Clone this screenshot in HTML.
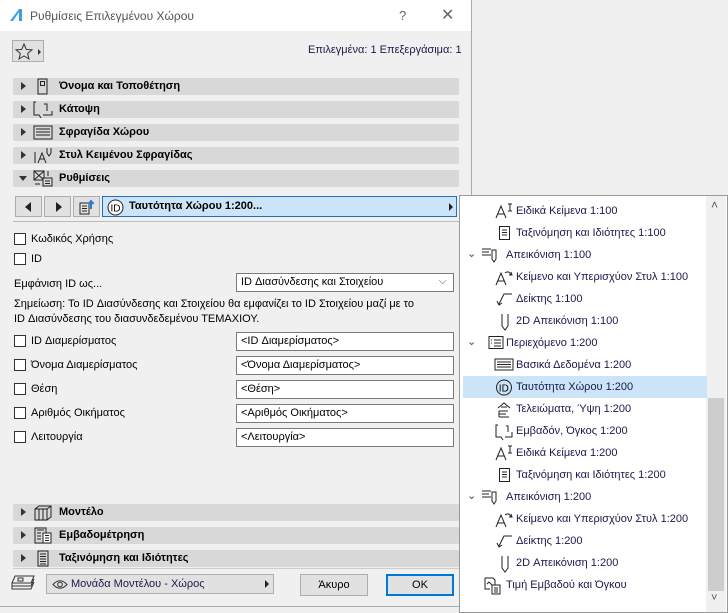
<!DOCTYPE html>
<html><head><meta charset="utf-8">
<style>
*{box-sizing:border-box;margin:0;padding:0}
body{width:728px;height:613px;position:relative;overflow:hidden;background:#f0f0f0;font-family:"Liberation Sans","DejaVu Sans",sans-serif;font-size:11px;color:#000}
.a{position:absolute;white-space:nowrap}
.dlg{position:absolute;left:0;top:0;width:472px;height:607px;background:#f0f0f0;border-right:1px solid #aaa;border-bottom:1px solid #aaa}
.title{position:absolute;left:0;top:0;width:471px;height:31px;background:#fff}
.hd{position:absolute;left:13px;width:446px;height:17px;background:#d8d8d8;border-radius:2px;font-weight:bold;font-size:11px}
.hd .tri{position:absolute;left:8px;top:4px;width:0;height:0;border-left:5px solid #333;border-top:4px solid transparent;border-bottom:4px solid transparent}
.hd .tri.d{left:6px;top:6px;border-top:5px solid #333;border-left:4px solid transparent;border-right:4px solid transparent;border-bottom:0}
.hd .ic{position:absolute;left:20px;top:0px;width:20px;height:17px}
.hd span{position:absolute;left:46px;top:2px}
.cb{position:absolute;left:14px;width:12px;height:12px;border:1px solid #333;background:#fff}
.lbl{position:absolute;left:31px}
.fld{position:absolute;left:236px;width:218px;height:19px;border:1px solid #7a7a7a;background:#fff;padding:2px 4px;font-size:11px}
.pop{position:absolute;left:459px;top:195px;width:269px;height:418px;background:#fff;border:1px solid #999}
.row{position:absolute;left:3px;width:244px;height:22px;color:#1a1a4a;font-size:11px}
.row span{position:absolute;top:5px;left:53px}
.row span.p{left:43px}
.row span.c{left:4px;top:3px;color:#444}
.row svg{position:absolute;top:3px}
.btn{position:absolute;border:1px solid #adadad;background:#e1e1e1;text-align:center}
</style></head><body>
<div class="dlg">
 <div class="title">
  <svg class="a" style="left:9px;top:8px" width="14" height="14"><path d="M1 13 L10 1 L13 1 L13 13 Z" fill="#3aa0e0"/><path d="M4 13 L10 4 L10 13Z" fill="#fff"/></svg>
  <div class="a" style="left:30px;top:9px;font-size:12px;color:#555">Ρυθμίσεις Επιλεγμένου Χώρου</div>
  <div class="a" style="left:399px;top:8px;font-size:13px;color:#666">?</div>
  <div class="a" style="left:441px;top:5px;font-size:16px;color:#666">✕</div>
 </div>
 <div class="a" style="left:12px;top:40px;width:32px;height:22px;border:1px solid #adadad;background:#e1e1e1">
  <svg class="a" style="left:2px;top:2px" width="28" height="18"><path d="M9 1 L11.3 6.5 L17 6.8 L12.6 10.5 L14 16 L9 13 L4 16 L5.4 10.5 L1 6.8 L6.7 6.5Z" fill="none" stroke="#333"/><path d="M23 6 L26 9 L23 12Z" fill="#333"/></svg>
 </div>
 <div class="a" style="left:308px;top:44px;color:#1a1a4a;font-size:11px">Επιλεγμένα: 1 Επεξεργάσιμα: 1</div>

 <div class="hd" style="top:78px"><i class="tri"></i><svg class="ic" viewBox="0 0 20 17"><rect x="5" y="1" width="9" height="15" fill="none" stroke="#222"/><rect x="7.5" y="3.5" width="4" height="4" fill="none" stroke="#222"/></svg><span>Όνομα και Τοποθέτηση</span></div>
 <div class="hd" style="top:101px"><i class="tri"></i><svg class="ic" viewBox="0 0 20 17"><path d="M3 1 L1 1 L1 14 L6 14 L8 17 M10 14 L19 14 L19 10 M14 10 L14 3 L11 3" fill="none" stroke="#222"/></svg><span>Κάτοψη</span></div>
 <div class="hd" style="top:124px"><i class="tri"></i><svg class="ic" viewBox="0 0 20 17"><rect x="1" y="2" width="18" height="13" fill="none" stroke="#222"/><path d="M3 5H17M3 8H17M3 11H17" stroke="#222"/></svg><span>Σφραγίδα Χώρου</span></div>
 <div class="hd" style="top:147px"><i class="tri"></i><svg class="ic" viewBox="0 0 20 17"><path d="M2 5V16M5 16L9 6L13 16M7 12H11M14 1V6L16 9L18 6V1" fill="none" stroke="#222"/></svg><span>Στυλ Κειμένου Σφραγίδας</span></div>
 <div class="hd" style="top:170px"><i class="tri d"></i><svg class="ic" viewBox="0 0 20 17"><rect x="1" y="1" width="10" height="9" fill="none" stroke="#222"/><path d="M1 1L11 10M11 1L1 10" stroke="#222"/><rect x="10" y="8" width="9" height="8" fill="#d8d8d8" stroke="#222"/><path d="M12 11H17M12 13.5H17M15 1V6M2 14H7" stroke="#222"/></svg><span>Ρυθμίσεις</span></div>

 <div class="a" style="left:15px;top:196px;width:27px;height:21px;border:1px solid #adadad;background:#e1e1e1"><i class="a" style="left:9px;top:5px;border-right:6px solid #222;border-top:5px solid transparent;border-bottom:5px solid transparent"></i></div>
 <div class="a" style="left:44px;top:196px;width:27px;height:21px;border:1px solid #adadad;background:#e1e1e1"><i class="a" style="left:11px;top:5px;border-left:6px solid #222;border-top:5px solid transparent;border-bottom:5px solid transparent"></i></div>
 <div class="a" style="left:73px;top:196px;width:27px;height:21px;border:1px solid #adadad;background:#e1e1e1"><svg class="a" style="left:4px;top:2px" width="20" height="16"><rect x="2" y="4" width="9" height="11" fill="none" stroke="#222"/><path d="M4 7H9M4 9.5H9M4 12H9" stroke="#222"/><path d="M13 10V3M10.5 5L13 2L15.5 5" fill="none" stroke="#2b7bd6" stroke-width="2"/></svg></div>
 <div class="a" style="left:102px;top:196px;width:355px;height:21px;border:1px solid #1f6fc5;background:#cce4f7">
  <svg class="a" style="left:4px;top:2px" width="17" height="17"><circle cx="8.5" cy="8.5" r="7.5" fill="#fff" stroke="#222"/><text x="3.5" y="12.5" font-size="10" font-family="Liberation Sans">ID</text></svg>
  <div class="a" style="left:26px;top:3px;font-weight:bold;font-size:11px">Ταυτότητα Χώρου 1:200...</div>
  <i class="a" style="left:346px;top:6px;border-left:4px solid #222;border-top:4px solid transparent;border-bottom:4px solid transparent"></i>
 </div>
 <div class="a" style="left:13px;top:221px;width:446px;height:1px;background:#bbb"></div>

 <div class="cb" style="top:233px"></div><div class="a lbl" style="top:233px">Κωδικός Χρήσης</div>
 <div class="cb" style="top:253px"></div><div class="a lbl" style="top:253px">ID</div>
 <div class="a" style="left:14px;top:278px">Εμφάνιση ID ως...</div>
 <div class="fld" style="top:273px;height:19px">ID Διασύνδεσης και Στοιχείου<span style="position:absolute;right:6px;top:1px;color:#555">⌵</span></div>
 <div class="a" style="left:14px;top:297px;line-height:15px">Σημείωση: Το ID Διασύνδεσης και Στοιχείου θα εμφανίζει το ID Στοιχείου μαζί με το<br>ID Διασύνδεσης του διασυνδεδεμένου ΤΕΜΑΧΙΟΥ.</div>

 <div class="cb" style="top:335px"></div><div class="a lbl" style="top:335px">ID Διαμερίσματος</div><div class="fld" style="top:332px">&lt;ID Διαμερίσματος&gt;</div>
 <div class="cb" style="top:359px"></div><div class="a lbl" style="top:359px">Όνομα Διαμερίσματος</div><div class="fld" style="top:356px">&lt;Όνομα Διαμερίσματος&gt;</div>
 <div class="cb" style="top:383px"></div><div class="a lbl" style="top:383px">Θέση</div><div class="fld" style="top:380px">&lt;Θέση&gt;</div>
 <div class="cb" style="top:407px"></div><div class="a lbl" style="top:407px">Αριθμός Οικήματος</div><div class="fld" style="top:404px">&lt;Αριθμός Οικήματος&gt;</div>
 <div class="cb" style="top:431px"></div><div class="a lbl" style="top:431px">Λειτουργία</div><div class="fld" style="top:428px">&lt;Λειτουργία&gt;</div>

 <div class="hd" style="top:504px"><i class="tri"></i><svg class="ic" viewBox="0 0 20 17"><path d="M2 5L6 2H18V13L14 16H2Z M2 5H14V16 M14 5L18 2" fill="none" stroke="#222"/><path d="M6 5V16M10 5V16" stroke="#222"/></svg><span>Μοντέλο</span></div>
 <div class="hd" style="top:527px"><i class="tri"></i><svg class="ic" viewBox="0 0 20 17"><rect x="2" y="1" width="11" height="15" fill="none" stroke="#222"/><rect x="10" y="6" width="8" height="10" fill="#fff" stroke="#222"/><path d="M4 3H11M12 8.5H16M12 11H16M12 13.5H16M4 6H8M4 9H8M4 12H8" stroke="#222"/></svg><span>Εμβαδομέτρηση</span></div>
 <div class="hd" style="top:550px"><i class="tri"></i><svg class="ic" viewBox="0 0 20 17"><rect x="5" y="1" width="10" height="15" fill="none" stroke="#222"/><path d="M7 4H13M7 6.5H13M7 9H13M7 11.5H13M7 14H13" stroke="#222"/></svg><span>Ταξινόμηση και Ιδιότητες</span></div>
 <div class="a" style="left:13px;top:568px;width:446px;height:1px;background:#ccc"></div>

 <svg class="a" style="left:10px;top:574px" width="26" height="18"><path d="M5 2H24L21 9H2Z M2 9V12H21L24 5 M2 12V15H21L24 8" fill="none" stroke="#333"/><rect x="8" y="4" width="5" height="3" fill="none" stroke="#333"/></svg>
 <div class="a" style="left:46px;top:574px;width:228px;height:20px;border:1px solid #adadad;background:#e1e1e1">
  <svg class="a" style="left:5px;top:4px" width="16" height="11"><path d="M1 5.5Q8 -2 15 5.5Q8 13 1 5.5Z" fill="none" stroke="#333"/><circle cx="8" cy="5.5" r="2.3" fill="none" stroke="#333"/></svg>
  <div class="a" style="left:24px;top:3px;color:#1a1a4a">Μονάδα Μοντέλου - Χώρος</div>
  <i class="a" style="left:218px;top:5px;border-left:4px solid #222;border-top:4px solid transparent;border-bottom:4px solid transparent"></i>
 </div>
 <div class="btn" style="left:300px;top:574px;width:68px;height:22px;padding-top:4px">Άκυρο</div>
 <div class="btn" style="left:386px;top:574px;width:68px;height:22px;padding-top:4px;border:2px solid #0078d7;padding-top:3px">OK</div>
</div>

<div class="pop">
 <div class="a" style="left:246px;top:0;width:20px;height:416px;background:#f0f0f0"></div>
 <div class="a" style="left:248px;top:202px;width:16px;height:193px;background:#cdcdcd"></div>
 <div class="a" style="left:251px;top:2px;color:#555;font-size:12px">˄</div>
 <div class="a" style="left:251px;top:396px;color:#555;font-size:11px">˅</div>
 <div class="row" style="top:180px;background:#cce4f7"></div>

 <div class="row" style="top:4px"><svg style="left:32px" width="18" height="16"><path d="M1 15L6 3L11 15M3 11H9M13 1H17M15 1V8M13 8H17" fill="none" stroke="#222"/></svg><span>Ειδικά Κείμενα 1:100</span></div>
 <div class="row" style="top:26px"><svg style="left:35px" width="14" height="16"><rect x="1.5" y="1.5" width="10" height="13" fill="none" stroke="#222"/><path d="M4 5H9M4 7.5H9M4 10H9" stroke="#222"/></svg><span>Ταξινόμηση και Ιδιότητες 1:100</span></div>
 <div class="row" style="top:48px"><span class="c">⌄</span><svg style="left:18px" width="24" height="18"><path d="M1 2H10M1 5H8M1 8H10M11 3V12L13 15L15 12V3Z" fill="none" stroke="#222"/></svg><span class="p">Απεικόνιση 1:100</span></div>
 <div class="row" style="top:70px"><svg style="left:32px" width="20" height="17"><path d="M1 16L6 4L11 16M3 12H9M10 4Q14 1 16 6M14 6H17L16 3" fill="none" stroke="#222"/></svg><span>Κείμενο και Υπερισχύον Στυλ 1:100</span></div>
 <div class="row" style="top:92px"><svg style="left:33px" width="18" height="16"><path d="M16 3H8L3 13M1 10L3 14L6 12" fill="none" stroke="#222"/></svg><span>Δείκτης 1:100</span></div>
 <div class="row" style="top:114px"><svg style="left:37px" width="12" height="18"><path d="M2 1V13L5 17L8 13V1" fill="none" stroke="#222"/></svg><span>2D Απεικόνιση 1:100</span></div>
 <div class="row" style="top:136px"><span class="c">⌄</span><svg style="left:25px" width="16" height="15"><rect x="1" y="1.5" width="14" height="12" fill="none" stroke="#222"/><path d="M6 5H13M6 8H13M6 11H13M3 5H4M3 8H4" stroke="#222"/></svg><span class="p">Περιεχόμενο 1:200</span></div>
 <div class="row" style="top:158px"><svg style="left:31px" width="20" height="15"><rect x="1" y="2" width="18" height="11" fill="none" stroke="#222"/><path d="M3 5H17M3 7.5H17M3 10H17" stroke="#222"/></svg><span>Βασικά Δεδομένα 1:200</span></div>
 <div class="row" style="top:180px"><svg style="left:32px" width="18" height="18"><circle cx="9" cy="8.5" r="7.5" fill="none" stroke="#222"/><text x="3.8" y="12.5" font-size="10" font-family="Liberation Sans">ID</text></svg><span>Ταυτότητα Χώρου 1:200</span></div>
 <div class="row" style="top:202px"><svg style="left:33px" width="16" height="17"><path d="M2 7L8 2L14 7M5 6H11M3 10V16M3 10H12M3 13H10M3 16H13" fill="none" stroke="#222"/></svg><span>Τελειώματα, Ύψη 1:200</span></div>
 <div class="row" style="top:224px"><svg style="left:31px" width="20" height="18"><path d="M4 2H2V14H7L9 17M11 14H18V9M14 9V3H12" fill="none" stroke="#222"/></svg><span>Εμβαδόν, Όγκος 1:200</span></div>
 <div class="row" style="top:246px"><svg style="left:32px" width="18" height="16"><path d="M1 15L6 3L11 15M3 11H9M13 1H17M15 1V8M13 8H17" fill="none" stroke="#222"/></svg><span>Ειδικά Κείμενα 1:200</span></div>
 <div class="row" style="top:268px"><svg style="left:35px" width="14" height="16"><rect x="1.5" y="1.5" width="10" height="13" fill="none" stroke="#222"/><path d="M4 5H9M4 7.5H9M4 10H9" stroke="#222"/></svg><span>Ταξινόμηση και Ιδιότητες 1:200</span></div>
 <div class="row" style="top:290px"><span class="c">⌄</span><svg style="left:18px" width="24" height="18"><path d="M1 2H10M1 5H8M1 8H10M11 3V12L13 15L15 12V3Z" fill="none" stroke="#222"/></svg><span class="p">Απεικόνιση 1:200</span></div>
 <div class="row" style="top:312px"><svg style="left:32px" width="20" height="17"><path d="M1 16L6 4L11 16M3 12H9M10 4Q14 1 16 6M14 6H17L16 3" fill="none" stroke="#222"/></svg><span>Κείμενο και Υπερισχύον Στυλ 1:200</span></div>
 <div class="row" style="top:334px"><svg style="left:33px" width="18" height="16"><path d="M16 3H8L3 13M1 10L3 14L6 12" fill="none" stroke="#222"/></svg><span>Δείκτης 1:200</span></div>
 <div class="row" style="top:356px"><svg style="left:37px" width="12" height="18"><path d="M2 1V13L5 17L8 13V1" fill="none" stroke="#222"/></svg><span>2D Απεικόνιση 1:200</span></div>
 <div class="row" style="top:378px"><svg style="left:21px" width="22" height="18"><path d="M1 1H9L11 3V9M1 1V12H6" fill="none" stroke="#222"/><path d="M3 7L5 5L8 8" fill="none" stroke="#222"/><rect x="8" y="8" width="8" height="9" fill="#fff" stroke="#222"/><path d="M10 11H14M10 13H14M10 15H14" stroke="#222"/></svg><span class="p">Τιμή Εμβαδού και Όγκου</span></div>
</div>
</body></html>
